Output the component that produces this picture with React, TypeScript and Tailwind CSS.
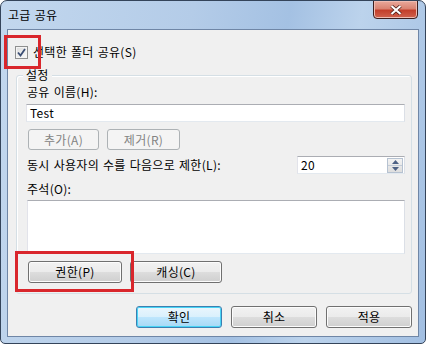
import React from 'react';

const font = { fontFamily: '"Noto Sans CJK KR", "Noto Sans", sans-serif' };

function WinButton({ label, w, disabled, isDefault }: { label: string; w: string; disabled?: boolean; isDefault?: boolean }) {
  if (disabled) {
    return (
      <div className={`${w} h-full flex items-center justify-center rounded-[3px] border border-[#adb2b5] bg-[#f4f4f4] text-[#838383] text-[12px] leading-none`}>
        {label}
      </div>
    );
  }
  return (
    <div
      className={`${w} h-full flex items-center justify-center rounded-[3px] border text-[12px] leading-none text-black ${
        isDefault
          ? 'border-[#3c7fb1] bg-[linear-gradient(#eaf6fd_0%,#d9f0fc_50%,#bee6fd_50%,#a7d9f5_100%)] shadow-[inset_0_0_0_1px_#48d4f5]'
          : 'border-[#707070] bg-[linear-gradient(#f2f2f2_0%,#ebebeb_50%,#dddddd_50%,#cfcfcf_100%)] shadow-[inset_0_0_0_1px_#fcfcfc]'
      }`}
    >
      {label}
    </div>
  );
}

export default function App() {
  return (
    <div
      className="w-[426px] h-[344px] flex flex-col rounded-t-[7px] rounded-b-[5px] border border-[#34445a] bg-[linear-gradient(100deg,#c2d7ee_0%,#b4cce8_40%,#a4c1e3_60%,#bcd3ec_75%,#a2bfe2_100%)] overflow-hidden tracking-[0.3px] [word-spacing:1px]"
      style={font}
    >
      {/* title bar */}
      <div className="h-[28px] flex items-start justify-between pl-[7px] pr-[7px]">
        <span className="mt-[6px] text-[12px] leading-[16px] text-black">고급 공유</span>
        <div className="w-[45px] h-[19px] -mt-px flex items-center justify-center rounded-b-[4px] border border-[#3d1f1f] bg-[linear-gradient(#e9a99b_0%,#d98372_45%,#c33f2b_55%,#d0624e_100%)] shadow-[inset_0_0_0_1px_#eebbb1]">
          <svg width="12" height="10" viewBox="0 0 12 10">
            <path d="M1.5 1 L10.5 9 M10.5 1 L1.5 9" stroke="#4a1a14" strokeWidth="3.6" />
            <path d="M1.5 1 L10.5 9 M10.5 1 L1.5 9" stroke="#ffffff" strokeWidth="2.2" />
          </svg>
        </div>
      </div>

      {/* client area */}
      <div className="mx-[6px] mb-[6px] flex-1 flex flex-col border border-[#6f86a6] bg-[#f0f0f0] text-[12px] leading-[16px] text-black">
        {/* share checkbox */}
        <div className="mt-[14px] ml-[7px] h-[16px] flex items-center gap-[3px]">
          <div className="w-[13px] h-[13px] flex items-center justify-center border border-[#8e8f8f] bg-[linear-gradient(135deg,#dcdcdc,#fafafa)] shadow-[inset_0_0_0_1px_#f4f4f4]">
            <svg width="9" height="9" viewBox="0 0 9 9">
              <path d="M1 4.5 L3.5 7.5 L8 1" fill="none" stroke="#3b4e74" strokeWidth="1.8" />
            </svg>
          </div>
          <span className="ml-[2px]">선택한 폴더 공유(S)</span>
        </div>

        {/* settings group */}
        <div className="relative mt-[15px] ml-[8px] mr-[6px] h-[219px] flex flex-col rounded-[3px] border border-[#d5dfe5] shadow-[inset_1px_1px_0_#ffffff] pl-[9px] pr-[6px]">
          <span className="absolute left-[6px] -top-[9px] px-[3px] bg-[#f0f0f0]">설정</span>

          <div className="mt-[8px] ml-px">공유 이름(H):</div>
          <div className="mt-[4px] h-[18px] flex items-center border border-[#abadb3] border-l-[#e2e3ea] border-r-[#dbdfe6] border-b-[#e3e9ef] bg-white px-[3px]">
            Test
          </div>

          <div className="mt-[7px] h-[21px] flex gap-[8px] ml-[2px]">
            <WinButton label="추가(A)" w="w-[71px]" disabled />
            <WinButton label="제거(R)" w="w-[73px]" disabled />
          </div>

          <div className="mt-[6px] h-[18px] flex items-center justify-between">
            <span className="ml-px">동시 사용자의 수를 다음으로 제한(L):</span>
            <div className="w-[108px] h-full flex items-center justify-between border border-[#abadb3] border-l-[#e2e3ea] border-r-[#dbdfe6] border-b-[#e3e9ef] bg-white pl-[3px] pr-px">
              <span>20</span>
              <div className="w-[16px] h-[15px] flex flex-col border border-[#b6c2d1] bg-[linear-gradient(#f3f3f3,#dedede)]">
                <div className="flex-1 flex items-center justify-center border-b border-[#c3ccd8]">
                  <svg width="7" height="4" viewBox="0 0 7 4"><path d="M3.5 0 L7 4 L0 4 Z" fill="#4d6185" /></svg>
                </div>
                <div className="flex-1 flex items-center justify-center">
                  <svg width="7" height="4" viewBox="0 0 7 4"><path d="M0 0 L7 0 L3.5 4 Z" fill="#4d6185" /></svg>
                </div>
              </div>
            </div>
          </div>

          <div className="mt-[7px] ml-px">주석(O):</div>
          <div className="mt-[3px] ml-px h-[54px] border border-[#abadb3] border-l-[#e2e3ea] border-r-[#dbdfe6] border-b-[#e3e9ef] bg-white" />

          <div className="mt-[7px] h-[22px] flex gap-[8px] ml-[2px]">
            <WinButton label="권한(P)" w="w-[94px]" />
            <WinButton label="캐싱(C)" w="w-[92px]" />
          </div>
        </div>

        {/* dialog buttons */}
        <div className="mt-[12px] h-[22px] flex justify-end gap-[9px] pr-[6px]">
          <WinButton label="확인" w="w-[86px]" isDefault />
          <WinButton label="취소" w="w-[86px]" />
          <WinButton label="적용" w="w-[86px]" />
        </div>
      </div>

      {/* red annotation boxes */}
      <div className="absolute left-[4px] top-[35px] w-[37px] h-[34px] border-[3px] border-[#d9262c]" />
      <div className="absolute left-[15px] top-[251px] w-[119px] h-[41px] border-[3px] border-[#d9262c]" />
    </div>
  );
}
